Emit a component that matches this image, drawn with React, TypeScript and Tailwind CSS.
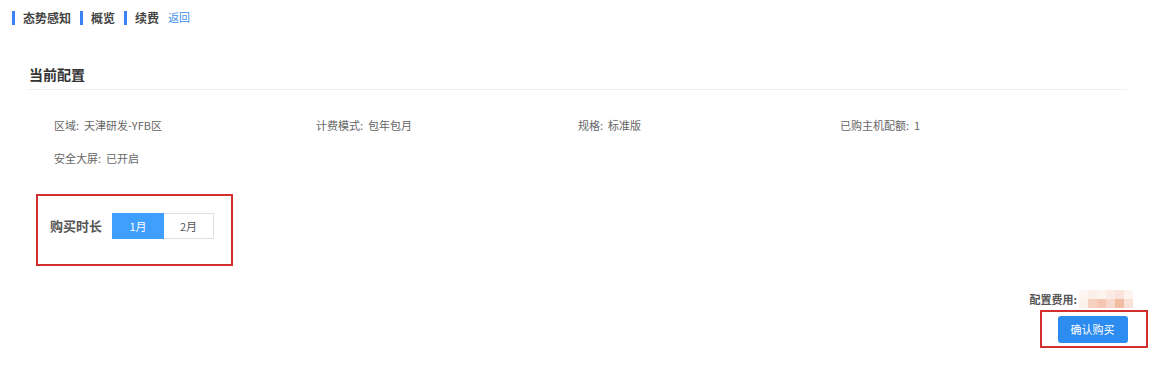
import React from 'react';

const NAV = ['态势感知', '概览', '续费'];

const INFO_ROW = [
  { label: '区域', value: '天津研发-YFB区' },
  { label: '计费模式', value: '包年包月' },
  { label: '规格', value: '标准版' },
  { label: '已购主机配额', value: '1' },
];

// pixelated (blurred) price
const BLUR = [
  ['#fdf6f3', '#fcefea', '#fdf4f0', '#fbebe4', '#fae3da', '#fdf3ef'],
  ['#fdf1ec', '#f7d2c1', '#f5c6b1', '#f8d8ca', '#f3bda4', '#fae2d8'],
];

export default function App() {
  return (
    <div
      className="w-[1167px] h-[368px] bg-white flex flex-col text-[#333]"
      style={{ fontFamily: '"Noto Sans CJK SC", "Noto Sans", sans-serif' }}
    >
      {/* Breadcrumb nav */}
      <div className="flex items-center h-[15px] mt-[10px] pl-[12px]">
        {NAV.map(n => (
          <div key={n} className="flex items-center mr-[9px]">
            <span className="w-[3px] h-[14px] bg-[#3b82f6] mr-[8px]" />
            <span className="text-[12px] font-bold leading-none text-[#444]">{n}</span>
          </div>
        ))}
        <span className="text-[11px] leading-none text-[#3b8eea]">返回</span>
      </div>

      {/* Current config */}
      <div className="ml-[28px] mr-[40px] mt-[42px]">
        <div className="text-[14px] font-bold leading-none text-[#333] pl-[1px] pb-[8px]">当前配置</div>
        <div className="h-px bg-[#eef0f6]" />

        <div className="pl-[26px] pt-[28px]">
          <div className="grid grid-cols-[262px_262px_262px_262px] text-[11px] leading-[14px] text-[#666]">
            {INFO_ROW.map(i => (
              <div key={i.label}>
                {i.label}:&nbsp; {i.value}
              </div>
            ))}
          </div>
          <div className="mt-[19px] text-[11px] leading-[14px] text-[#666]">安全大屏:&nbsp; 已开启</div>
        </div>
      </div>

      {/* Duration picker */}
      <div className="ml-[36px] mt-[29px] w-[197px] h-[72px] border-2 border-[#d32f2f] pl-[12px] pt-[17px]">
        <div className="flex items-center">
          <span className="text-[13px] font-bold text-[#555] mr-[10px]">购买时长</span>
          <div className="flex">
            <button className="w-[52px] h-[26px] bg-[#409eff] border border-[#409eff] text-white text-[11px]">1月</button>
            <button className="w-[50px] h-[26px] bg-white border border-[#dcdfe6] border-l-0 text-[#555] text-[11px]">2月</button>
          </div>
        </div>
      </div>

      {/* Price + confirm */}
      <div className="flex flex-col items-end mr-[19px] mt-[24px]">
        <div className="flex items-center mr-[15px]">
          <span className="text-[11px] font-bold text-[#555] mr-[2px]">配置费用:</span>
          <div className="grid grid-cols-[repeat(6,9px)]">
            {BLUR.flat().map((c, i) => (
              <div key={i} className="w-[9px] h-[9px]" style={{ backgroundColor: c }} />
            ))}
          </div>
        </div>
        <div className="mt-[2px] w-[108px] h-[38px] border-2 border-[#d32f2f] flex items-center justify-center pr-[3px]">
          <button className="w-[70px] h-[27px] rounded-[3px] bg-[#2d8cf0] text-white text-[11px]">确认购买</button>
        </div>
      </div>
    </div>
  );
}
